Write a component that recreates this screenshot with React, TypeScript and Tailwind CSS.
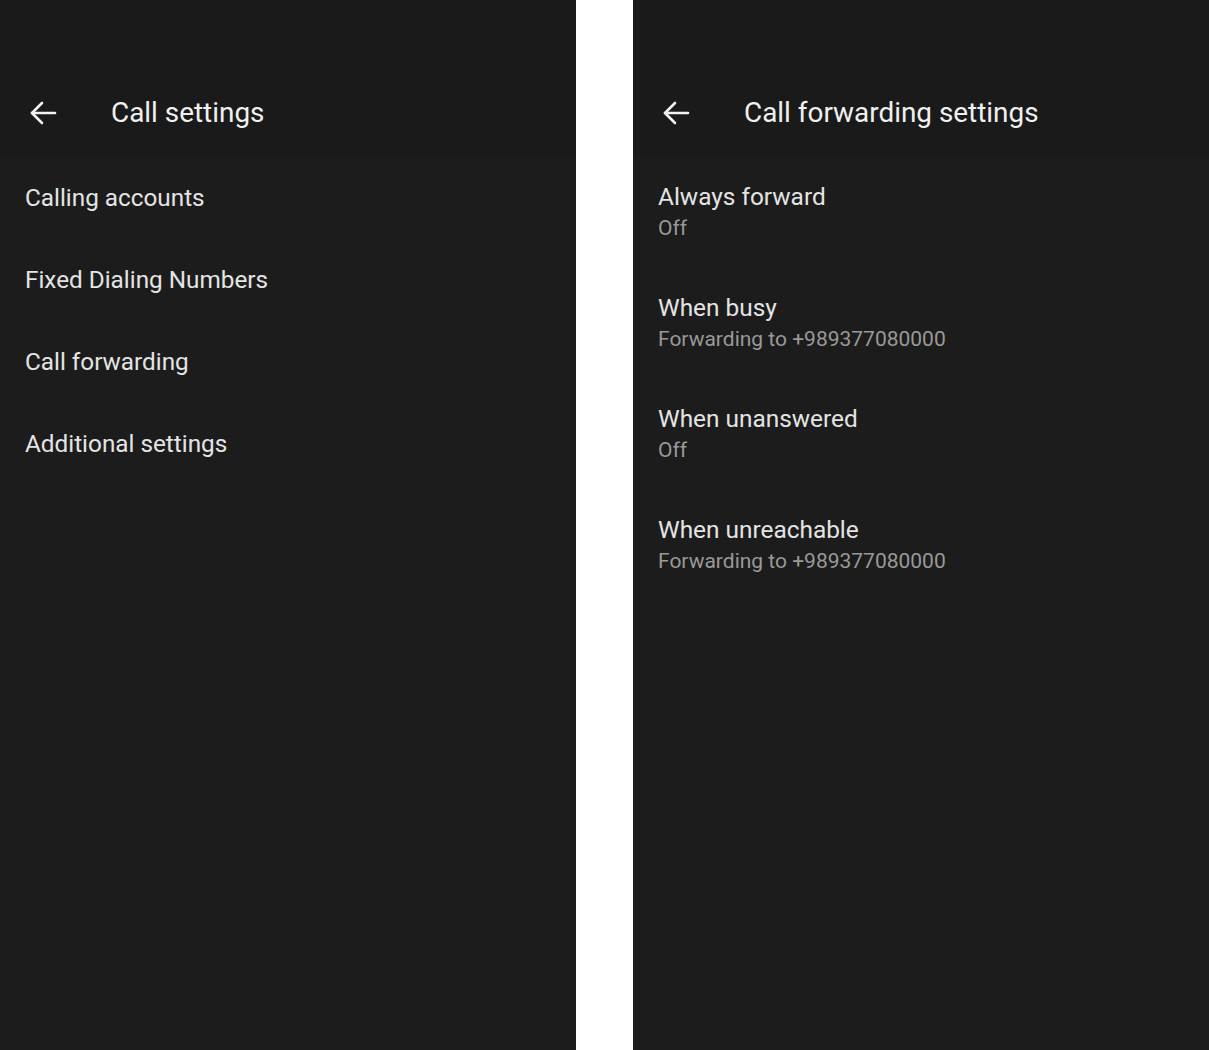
import React from 'react';

const font = { fontFamily: 'Roboto, "Noto Sans", sans-serif' };

const BackArrow = () => (
  <svg width="28" height="24" viewBox="0 0 28 24" fill="none" stroke="#f2f2f2" strokeWidth="2.6" strokeLinecap="round" strokeLinejoin="round">
    <path d="M26 12H3" />
    <path d="M13 2 3 12l10 10" />
  </svg>
);

const Header = ({ title, arrowPad, titlePad }: { title: string; arrowPad: string; titlePad: string }) => (
  <div className="h-[157px] pt-[68px] flex items-center bg-[#1a1a1a]">
    <div className={arrowPad}>
      <BackArrow />
    </div>
    <span className={`${titlePad} text-[27.9px] text-[#f0f0f0]`}>{title}</span>
  </div>
);

const callItems = ['Calling accounts', 'Fixed Dialing Numbers', 'Call forwarding', 'Additional settings'];

const forwardItems = [
  { title: 'Always forward', sub: 'Off' },
  { title: 'When busy', sub: 'Forwarding to +989377080000' },
  { title: 'When unanswered', sub: 'Off' },
  { title: 'When unreachable', sub: 'Forwarding to +989377080000' },
];

export default function App() {
  return (
    <div className="flex w-[1209px] h-[1050px] bg-white overflow-hidden" style={font}>
      {/* Call settings */}
      <div className="w-[576px] h-full bg-[#1c1c1c] flex flex-col">
        <Header title="Call settings" arrowPad="pl-[29px]" titlePad="pl-[54px]" />
        <div className="flex flex-col">
          {callItems.map((item) => (
            <div key={item} className="h-[82px] flex items-center pl-[25px] text-[24.3px] text-[#e4e4e4]">
              {item}
            </div>
          ))}
        </div>
      </div>

      <div className="w-[57px]" />

      {/* Call forwarding settings */}
      <div className="w-[576px] h-full bg-[#1c1c1c] flex flex-col">
        <Header title="Call forwarding settings" arrowPad="pl-[29px]" titlePad="pl-[54px]" />
        <div className="flex flex-col">
          {forwardItems.map((item) => (
            <div key={item.title} className="h-[111px] flex flex-col justify-center pl-[25px]">
              <span className="text-[24.4px] leading-[30px] text-[#e4e4e4]">{item.title}</span>
              <span className="text-[21px] leading-[32px] text-[#999999]">{item.sub}</span>
            </div>
          ))}
        </div>
      </div>
    </div>
  );
}
